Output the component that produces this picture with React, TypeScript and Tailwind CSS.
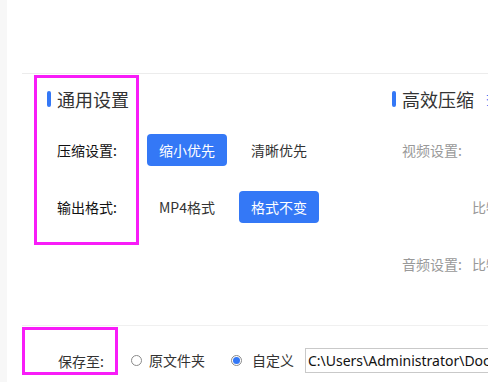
import React from 'react';

const cjk = "font-['Noto_Sans_CJK_SC',_'Noto_Sans',_sans-serif]";

const Heading = ({ title, extra }: { title: string; extra?: string }) => (
    <div className="flex items-center h-[20px]">
        <span className="w-[4px] h-[16px] shrink-0 rounded-full bg-[#3478f6]" />
        <span className="ml-[6px] shrink-0 text-[18px] leading-[20px] text-[#333] whitespace-nowrap">{title}</span>
        {extra && <span className="ml-[12px] shrink-0 text-[14px] text-[#3478f6] whitespace-nowrap">{extra}</span>}
    </div>
);

// option chips, the active one is blue
const Option = ({ label, active }: { label: string; active?: boolean }) => (
    <div
        className={
            active
                ? 'w-[80px] h-[32px] rounded-[4px] bg-[#3478f6] text-white text-[14px] flex items-center justify-center'
                : 'w-[80px] h-[32px] rounded-[4px] text-[#333] text-[14px] flex items-center justify-center'
        }
    >
        {label}
    </div>
);

const Radio = ({ checked }: { checked?: boolean }) => (
    <span className="w-[11px] h-[11px] rounded-full border border-[#8a8a8a] flex items-center justify-center shrink-0">
        {checked && <span className="w-[7px] h-[7px] rounded-full bg-[#3478f6]" />}
    </span>
);

export default function App() {
    return (
        <div className={`relative w-[488px] h-[382px] overflow-hidden bg-white flex ${cjk}`}>
            <div className="w-[7px] shrink-0 bg-[#f7f7f7]" />

            <div className="flex-1 min-w-0 pl-[15px] flex flex-col">
                <div className="h-[73px] shrink-0" />

                {/* settings */}
                <div className="h-[252px] shrink-0 border-t border-[#ececec] flex">
                    <div className="w-[370px] shrink-0 pl-[25px] pt-[15px]">
                        <Heading title="通用设置" />
                        <div className="mt-[25px] pl-[10px] flex flex-col gap-[25px]">
                            <div className="flex items-center h-[32px]">
                                <span className="w-[90px] shrink-0 text-[14px] text-[#111]">压缩设置:</span>
                                <div className="flex gap-[12px]">
                                    <Option label="缩小优先" active />
                                    <Option label="清晰优先" />
                                </div>
                            </div>
                            <div className="flex items-center h-[32px]">
                                <span className="w-[90px] shrink-0 text-[14px] text-[#111]">输出格式:</span>
                                <div className="flex gap-[12px]">
                                    <Option label="MP4格式" />
                                    <Option label="格式不变" active />
                                </div>
                            </div>
                        </div>
                    </div>

                    <div className="flex-1 min-w-0 pt-[15px]">
                        <Heading title="高效压缩" extra="查看说明" />
                        <div className="mt-[25px] pl-[10px] flex flex-col gap-[25px] text-[14px] text-[#999] whitespace-nowrap">
                            <div className="flex items-center h-[32px]">
                                <span className="w-[70px] shrink-0">视频设置:</span>
                            </div>
                            <div className="flex items-center h-[32px]">
                                <span className="w-[70px] shrink-0" />
                                <span className="shrink-0">比特率</span>
                            </div>
                            <div className="flex items-center h-[32px]">
                                <span className="w-[70px] shrink-0">音频设置:</span>
                                <span className="shrink-0">比特率</span>
                            </div>
                        </div>
                    </div>
                </div>

                {/* save path */}
                <div className="flex-1 border-t border-[#f0f0f0] pt-[22px] pl-[36px]">
                    <div className="flex items-center h-[25px] text-[14px] text-[#333] whitespace-nowrap">
                        <span className="pt-[2px]">保存至:</span>
                        <span className="ml-[27px]"><Radio /></span>
                        <span className="ml-[7px]">原文件夹</span>
                        <span className="ml-[26px]"><Radio checked /></span>
                        <span className="ml-[10px]">自定义</span>
                        <div className="ml-[11px] w-[260px] h-[25px] shrink-0 border border-[#c9c9c9] pl-[2px] flex items-center text-[#111] font-['Noto_Sans',_sans-serif]">
                            C:\Users\Administrator\Documents\Videos
                        </div>
                    </div>
                </div>
            </div>

            {/* annotation boxes */}
            <div className="absolute left-[34px] top-[75px] w-[105px] h-[170px] border-[3px] border-[#f81cf8]" />
            <div className="absolute left-[22px] top-[327px] w-[96px] h-[48px] border-[3px] border-[#f81cf8]" />
        </div>
    );
}
